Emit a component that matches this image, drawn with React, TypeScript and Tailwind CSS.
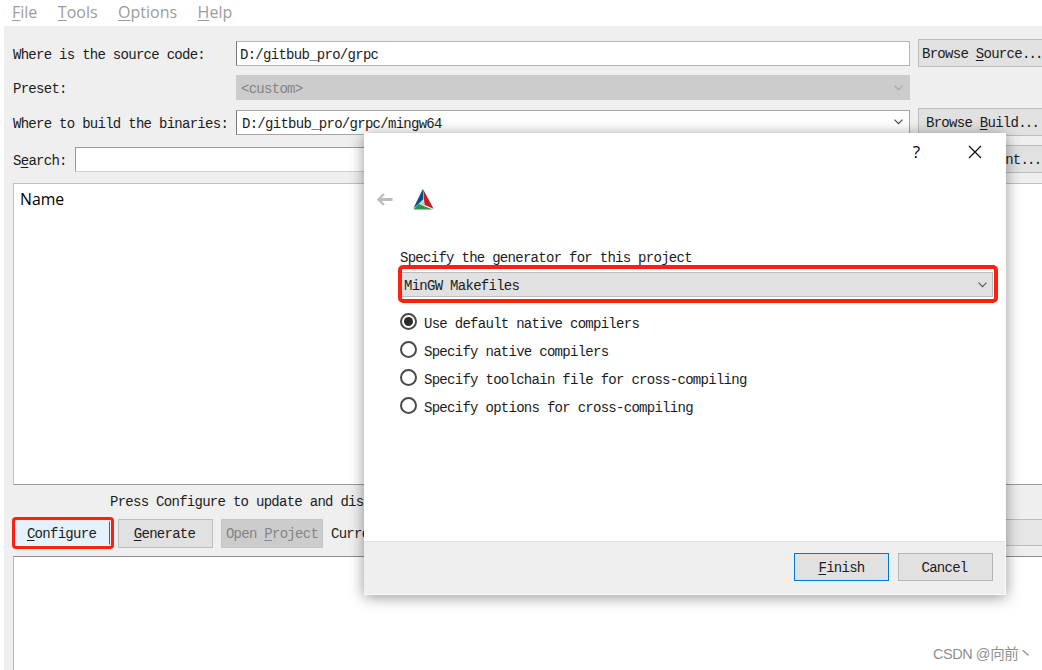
import type { ReactNode } from 'react';

const mono = "font-['Liberation_Mono','Noto_Sans_CJK_SC',monospace] text-[14px] leading-[16px] tracking-[-0.72px] whitespace-pre";
const sans = "font-['Open_Sans','Noto_Sans',sans-serif] tracking-normal";

// Text with one underlined access key
function Mnemonic({ text, at }: { text: string; at: number }) {
  return (
    <span>
      {text.slice(0, at)}
      <span className="underline underline-offset-2">{text[at]}</span>
      {text.slice(at + 1)}
    </span>
  );
}

function Chevron({ className = '' }: { className?: string }) {
  return (
    <svg className={`w-[9px] h-[6px] shrink-0 ${className}`} viewBox="0 0 9 6" fill="none" stroke="currentColor">
      <path d="M0.5 0.7L4.5 4.7L8.5 0.7" strokeWidth="1.1" />
    </svg>
  );
}

function Button({ children, className = '' }: { children: ReactNode; className?: string }) {
  return (
    <button className={`flex items-center justify-center shrink-0 border ${className}`}>
      {children}
    </button>
  );
}

function MoreButton({ text, at, className = '' }: { text: string; at: number; className?: string }) {
  return (
    <button className={`flex items-center shrink-0 h-[28px] pt-[2px] bg-[#e1e1e1] border border-[#bcbcbc] ${className}`}>
      <Mnemonic text={text} at={at} />
      <span className="tracking-[-1.8px]">...</span>
    </button>
  );
}

function MenuBar() {
  return (
    <nav className={`flex h-[26px] gap-[20.5px] pl-3 text-[16px] leading-[24px] text-[#9c9c9c] ${sans}`}>
      {['File', 'Tools', 'Options', 'Help'].map((item) => (
        <Mnemonic key={item} text={item} at={0} />
      ))}
    </nav>
  );
}

function PathRows() {
  return (
    <div className="flex flex-col">
      <div className="flex items-center h-[28px]">
        <label className="w-[223px] pt-[3px]">Where is the source code:</label>
        <div className="flex items-center w-[674px] h-[25px] pl-[3px] pt-[3px] bg-white border border-[#b4b4b4] border-l-[#7a7a7a]">
          D:/gitbub_pro/grpc
        </div>
        <MoreButton className="ml-2 w-[132px] pl-[3px]" text="Browse Source" at={7} />
      </div>
      <div className="flex items-center h-[25px] mt-2">
        <label className="w-[223px] pt-[3px]">Preset:</label>
        <div className="flex items-center justify-between w-[674px] h-[25px] pl-[5px] pr-[7px] bg-[#cccccc] text-[#858585]">
          <span className="pt-[2px]">{'<custom>'}</span>
          <Chevron className="text-[#a6a6a6]" />
        </div>
      </div>
      <div className="flex items-center h-[28px] mt-2">
        <label className="w-[223px] pt-[3px]">Where to build the binaries:</label>
        <div className="flex items-center justify-between w-[674px] h-[25px] pl-[5px] pr-[6px] bg-white border border-[#a6a6a6] border-l-[#7a7a7a]">
          <span className="pt-[4px]">D:/gitbub_pro/grpc/mingw64</span>
          <Chevron className="text-[#444]" />
        </div>
        <MoreButton className="ml-2 w-[132px] pl-[7px]" text="Browse Build" at={7} />
      </div>
      <div className="flex items-center h-[28px] mt-[9px]">
        <label className="w-[62px] pt-[4px]">
          <Mnemonic text="Search:" at={1} />
        </label>
        <div className="w-[560px] h-[25px] bg-white border border-[#999] border-b-[#d0d0d0]" />
        <MoreButton className="ml-auto w-[118px] pl-[3px]" text="Environment" at={1} />
      </div>
    </div>
  );
}

function Actions() {
  return (
    <div className="flex items-start h-[29px] mt-[7px]">
      <div className="w-[102px] h-[32px] -ml-px -mt-[2px] p-px border-[3px] border-[#fc2012] rounded-[4px] shrink-0">
        <Button className="w-[94px] h-[24px] pt-[2px] pr-[3px] bg-[#e5f1fb] border-[#e5f1fb] border-r-[#0078d7]">
          <Mnemonic text="Configure" at={0} />
        </Button>
      </div>
      <Button className="ml-1 w-[95px] h-[29px] pr-[2px] bg-[#e1e1e1] border-[#bfbfbf]">
        <Mnemonic text="Generate" at={0} />
      </Button>
      <Button className="ml-2 w-[102px] h-[29px] bg-[#cccccc] border-[#c4c4c4] text-[#858585]">
        <Mnemonic text="Open Project" at={5} />
      </Button>
      <span className="ml-2 mt-[7px]">Current Generator: None</span>
      <div className="ml-auto w-[450px] h-[27px] bg-[#e6e6e6] border border-[#bcbcbc]" />
    </div>
  );
}

function CMakeLogo() {
  return (
    <svg className="w-[21px] h-[21px]" viewBox="0 0 21 21">
      <path d="M9.8 0L10.4 10.5L4.6 15.8L0.3 19.5Z" fill="#064f8c" />
      <path d="M10 0L20.6 19.8L11.5 16Z" fill="#be2128" />
      <path d="M10.2 10.3L11.6 16.4L5.4 15.6Z" fill="#cdcdce" />
      <path d="M5.6 15.1L19.8 20.5H0.3Z" fill="#249847" />
    </svg>
  );
}

const options = [
  'Use default native compilers',
  'Specify native compilers',
  'Specify toolchain file for cross-compiling',
  'Specify options for cross-compiling',
];

function GeneratorDialog() {
  return (
    <div className="absolute left-[364px] top-[133px] flex flex-col w-[642px] h-[462px] bg-white border-r border-b border-[#fafafa] shadow-[0_2px_14px_rgba(0,0,0,0.42)]">
      <div className={`flex items-center justify-end h-[38px] pr-[23px] text-black ${sans}`}>
        <span className="w-[9px] text-[17px] font-medium text-center">?</span>
        <svg className="ml-[47px] w-[14px] h-[14px]" viewBox="0 0 14 14" stroke="#111" strokeWidth="1.3">
          <path d="M1 1L13 13M13 1L1 13" />
        </svg>
      </div>
      <div className="flex items-center h-[56px] pl-[13px]">
        <svg className="w-[16px] h-[13px]" viewBox="0 0 16 13" fill="none" stroke="#bdbdbd">
          <path d="M1.5 6.5H15.5" strokeWidth="3" />
          <path d="M7 1L1.5 6.5L7 12" strokeWidth="2.4" />
        </svg>
        <div className="ml-[20px]">
          <CMakeLogo />
        </div>
      </div>
      <div className="flex flex-col flex-1 pl-[36px] pt-[23px]">
        <span>Specify the generator for this project</span>
        <div className="w-[600px] h-[38px] -ml-[2px] -mt-px pt-[3px] pr-px border-4 border-[#fc2012] rounded-[5px]">
          <div className="flex items-center justify-between h-[25px] pl-[2px] pr-[5px] bg-[#e1e1e1] border border-l-0 border-[#bcbcbc]">
            <span className="pt-[2px]">MinGW Makefiles</span>
            <Chevron className="text-[#555]" />
          </div>
        </div>
        <div className="flex flex-col gap-[11px] mt-[10px]">
          {options.map((option, i) => (
            <label key={option} className="flex items-center h-[17px]">
              <span className="flex items-center justify-center w-[17px] h-[17px] rounded-full border-2 border-[#4a4a4a]">
                {i === 0 && <span className="w-[9px] h-[9px] rounded-full bg-[#2b2b2b]" />}
              </span>
              <span className="ml-[7px] pt-[4px]">{option}</span>
            </label>
          ))}
        </div>
      </div>
      <div className="flex justify-end gap-[9px] h-[53px] pt-[11px] pr-[12px] bg-[#efefef] border-t border-[#dfdfdf]">
        <Button className="w-[95px] h-[28px] pt-[2px] bg-[#e1e1e1] border-[#0078d7]">
          <Mnemonic text="Finish" at={0} />
        </Button>
        <Button className="w-[95px] h-[28px] pt-[2px] pr-[2px] bg-[#e1e1e1] border-[#b5b5b5]">Cancel</Button>
      </div>
    </div>
  );
}

export default function App() {
  return (
    <div className={`relative w-[1042px] h-[670px] overflow-hidden bg-white text-[#1c1c1c] ${mono}`}>
      <MenuBar />
      <main className="flex flex-col w-[1046px] h-[644px] ml-1 pl-[9px] pt-[13px] bg-[#efefef]">
        <PathRows />
        <div className={`h-[302px] mt-[10px] pl-[6px] pt-[3px] bg-white border border-[#c0c0c0] border-b-[#9a9aa0] text-[15.8px] leading-[24px] text-black shrink-0 ${sans}`}>
          Name
        </div>
        <p className="h-[18px] mt-[9px] pl-[97px]">
          Press Configure to update and display new values in red, then press Generate to generate selected build files.
        </p>
        <Actions />
        <div className="flex-1 mt-[8px] bg-white border border-b-0 border-[#b8b8b8] border-t-[#8c8c8c]" />
      </main>
      <GeneratorDialog />
      <div className="absolute left-[933px] top-[644px] font-['Liberation_Sans','Noto_Sans_CJK_SC',sans-serif] text-[14.5px] leading-[20px] tracking-[-0.45px] text-[#8f8f8f]">
        CSDN @向前丶
      </div>
    </div>
  );
}
